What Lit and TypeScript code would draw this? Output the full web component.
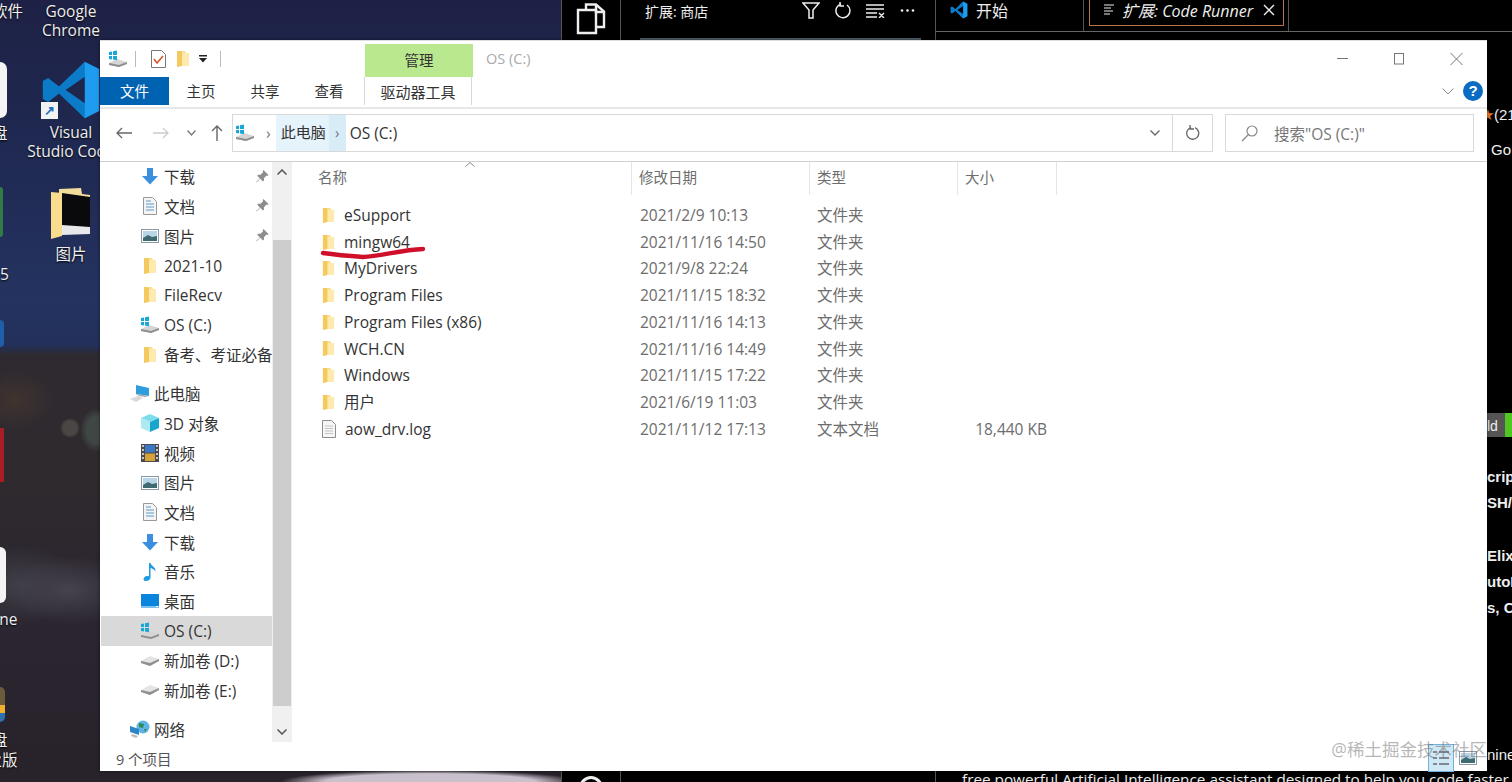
import { LitElement, html, css, svg } from "lit";
import { customElement } from "lit/decorators.js";

const folder = (w = 14, h = 18) => html`<svg width=${w} height=${h} viewBox="0 0 14 18">
  <path d="M1 1h8l1 2h3v13H3l-2 1z" fill="#fbe08f" />
  <path d="M1 1h4l1 1v14l-5 1z" fill="#f4c95f" />
  <path d="M6 3h7v13H6z" fill="#fdeaae" />
</svg>`;

const winDrive = (w = 20, h = 18) => html`<svg width=${w} height=${h} viewBox="0 0 20 18">
  <path d="M1 13l8-4 10 3v2l-8 3-10-2z" fill="#d5d5d5" />
  <path d="M1 13l10 2 8-3v2l-8 3-10-2z" fill="#8e8e8e" />
  <path d="M1 2l3-.6V5H1zM5 1.2l4-.8V5H5zM1 6h3v3.4L1 9zM5 6h4v4.2l-4-.6z" fill="#18a7d8" />
</svg>`;

const drive = () => html`<svg width="20" height="14" viewBox="0 0 20 14">
  <path d="M1 7l9-5 9 3v2l-9 5-9-3z" fill="#e4e4e4" />
  <path d="M1 7l9 2 9-4v2l-9 5-9-3z" fill="#8f8f8f" />
</svg>`;

const doc = () => html`<svg width="16" height="18" viewBox="0 0 16 18">
  <path d="M1.5.5h9l4 4v13h-13z" fill="#f4f4f4" stroke="#999" />
  <path d="M4 4h5M4 7h8M4 10h8M4 13h8" stroke="#5a9bc8" stroke-width="1.2" />
</svg>`;

const picture = () => html`<svg width="18" height="14" viewBox="0 0 18 14">
  <rect x=".5" y=".5" width="17" height="13" fill="#fff" stroke="#8c9aa8" />
  <rect x="2" y="2" width="14" height="10" fill="#b9d6e8" />
  <path d="M2 9l5-3 4 2 5-1v5H2z" fill="#3f6a70" />
</svg>`;

const download = () => html`<svg width="18" height="17" viewBox="0 0 18 17">
  <path d="M6 0h6v8h5l-8 8.5L1 8h5z" fill="#3a8fe0" />
</svg>`;

const pin = () => html`<svg width="13" height="13" viewBox="0 0 13 13">
  <path d="M7.5 0l5 5-1 1-1-.4-2.6 2.6.1 2.3-1 1-2.8-2.8L1 12l-1 .6.6-1 3.3-3.2L1.2 5.7l1-1 2.300.1L7.100 2.200 6.700 1.200z" fill="#8d8d8d" />
</svg>`;

const pc = () => html`<svg width="20" height="17" viewBox="0 0 20 17">
  <path d="M6 0l13 3v8L6 9z" fill="#2f9cdc" />
  <path d="M6 9l13 2-4 1-6-1z" fill="#aaa" />
  <path d="M0 14l8-3 5 2-7 4z" fill="#d8d8d8" />
</svg>`;

const cube = () => html`<svg width="18" height="18" viewBox="0 0 18 18">
  <path d="M9 0l9 4-9 4-9-4z" fill="#7fdcec" />
  <path d="M0 4l9 4v10l-9-4z" fill="#aeeaf2" />
  <path d="M18 4L9 8v10l9-4z" fill="#18a6cf" />
</svg>`;

const video = () => html`<svg width="18" height="18" viewBox="0 0 18 18">
  <rect width="18" height="18" fill="#4b4b50" />
  <rect x="4" y="1" width="10" height="7.500" fill="#3a77c4" />
  <rect x="4" y="9.500" width="10" height="7.500" fill="#d8a23a" />
  <path d="M1 2h2M1 6h2M1 10h2M1 14h2M15 2h2M15 6h2M15 10h2M15 14h2" stroke="#eee" stroke-width="1.500" />
</svg>`;

const music = () => html`<svg width="14" height="18" viewBox="0 0 14 18">
  <path d="M6 0h1.500c.5 3 5.500 4 5 8.500C11.500 6.500 9 5.500 7.500 5v9.500C7.500 16.500 5.500 18 3 18S0 16 1.200 14.500C2.500 13 5 12.800 6 13.300z" fill="#1f9be0" />
</svg>`;

const desktopIcon = () => html`<svg width="18" height="14" viewBox="0 0 18 14">
  <rect width="18" height="14" fill="#0a84dc" />
  <rect y="12" width="18" height="2" fill="#7cc0ee" />
  <rect x="15" y="12" width="2" height="1" fill="#fff" />
</svg>`;

const network = () => html`<svg width="20" height="18" viewBox="0 0 20 18">
  <circle cx="13" cy="7" r="6.500" fill="#5fb4e6" />
  <path d="M9 3l5 1-1 4-4-1zM14 9l3 0-2 3z" fill="#2e8a58" />
  <path d="M0 6l9 3v6l-9-3z" fill="#2d86c8" />
  <path d="M2 14l6 2-2 2-5-2z" fill="#bbb" />
</svg>`;

const logFile = () => html`<svg width="14" height="18" viewBox="0 0 14 18">
  <path d="M.5.5h9l4 4v13H.5z" fill="#f6f6f6" stroke="#8e8e8e" />
  <path d="M3 6h8M3 8.500h8M3 11h8M3 13.500h8" stroke="#c4c4c4" />
</svg>`;

const vsLogo = (size: number) => html`<svg width=${size} height=${size} viewBox="0 0 100 100">
  <path d="M73 3L97 15v70L73 97 38 60l35 12V28L38 40z" fill="#1f9cf0" />
  <path d="M73 3L30 44 12 30 3 35v30l9 5 18-14 43 41V72L41 50l32-22z" fill="#0b7bc8" />
</svg>`;

type NavRow = { icon: unknown; label: string; pinned?: boolean; top?: boolean; gap?: boolean; selected?: boolean };

const navRows: NavRow[] = [
  { icon: download(), label: "下载", pinned: true },
  { icon: doc(), label: "文档", pinned: true },
  { icon: picture(), label: "图片", pinned: true },
  { icon: folder(), label: "2021-10" },
  { icon: folder(), label: "FileRecv" },
  { icon: winDrive(), label: "OS (C:)" },
  { icon: folder(), label: "备考、考证必备资料" },
  { icon: pc(), label: "此电脑", top: true, gap: true },
  { icon: cube(), label: "3D 对象" },
  { icon: video(), label: "视频" },
  { icon: picture(), label: "图片" },
  { icon: doc(), label: "文档" },
  { icon: download(), label: "下载" },
  { icon: music(), label: "音乐" },
  { icon: desktopIcon(), label: "桌面" },
  { icon: winDrive(), label: "OS (C:)", selected: true },
  { icon: drive(), label: "新加卷 (D:)" },
  { icon: drive(), label: "新加卷 (E:)" },
  { icon: network(), label: "网络", top: true, gap: true },
];

const files = [
  ["eSupport", "2021/2/9 10:13", "文件夹", ""],
  ["mingw64", "2021/11/16 14:50", "文件夹", ""],
  ["MyDrivers", "2021/9/8 22:24", "文件夹", ""],
  ["Program Files", "2021/11/15 18:32", "文件夹", ""],
  ["Program Files (x86)", "2021/11/16 14:13", "文件夹", ""],
  ["WCH.CN", "2021/11/16 14:49", "文件夹", ""],
  ["Windows", "2021/11/15 17:22", "文件夹", ""],
  ["用户", "2021/6/19 11:03", "文件夹", ""],
  ["aow_drv.log", "2021/11/12 17:13", "文本文档", "18,440 KB"],
];

@customElement("app-root")
export class AppRoot extends LitElement {
  static styles = css`
    :host {
      display: block;
      width: 1512px;
      height: 782px;
      overflow: hidden;
      font-family: "Open Sans", "Noto Sans CJK SC", sans-serif;
      font-size: 15.5px;
      color: #333;
    }
    .desktop {
      position: relative;
      width: 1512px;
      height: 782px;
      overflow: hidden;
      background:
        radial-gradient(ellipse 10px 10px at 70px 428px, #4a4644 70%, transparent),
        radial-gradient(ellipse 16px 22px at 96px 430px, #3f4644 60%, transparent),
        radial-gradient(ellipse 40px 30px at 15px 400px, #41332f, transparent),
        radial-gradient(ellipse 60px 34px at 70px 590px, #46424e, transparent),
        radial-gradient(ellipse 60px 40px at 20px 585px, #403f48, transparent),
        radial-gradient(ellipse 150px 12px at 430px 782px, #c8c0cb 70%, transparent),
        linear-gradient(180deg, #1e2145 0, #1f2850 130px, #243360 300px, #22305a 345px, #2e2a30 355px, #2f2a2e 480px, #2a2530 640px, #28222a 782px);
    }
    /* desktop icons */
    .dlabel {
      position: absolute;
      width: 96px;
      left: 23px;
      text-align: center;
      color: #eee;
      line-height: 19px;
      text-shadow: 0 1px 2px #000;
      white-space: nowrap;
    }
    .edge {
      position: absolute;
      left: 0;
      color: #eee;
      line-height: 19px;
      text-shadow: 0 1px 2px #000;
      white-space: nowrap;
    }
    .tile {
      position: absolute;
      left: 0;
      border-radius: 0 8px 8px 0;
    }
    .vsicon {
      position: absolute;
      left: 41px;
      top: 60px;
      display: block;
    }
    .shortcut {
      position: absolute;
      left: 41px;
      top: 102px;
      width: 17px;
      height: 17px;
      background: #f2f2f2;
      color: #1b6fc4;
      font: bold 13px/17px "Liberation Sans", sans-serif;
      text-align: center;
    }
    .dfolder {
      position: absolute;
      left: 51px;
      top: 187px;
    }

    /* editor behind */
    .code {
      position: absolute;
      left: 561px;
      top: 0;
      right: 0;
      bottom: 0;
      background: #000;
      color: #eee;
      display: flex;
      border-left: 1px solid #555;
    }
    .activity {
      width: 59px;
      flex: none;
      border-right: 1px solid #555;
      display: flex;
      flex-direction: column;
      justify-content: space-between;
      align-items: center;
      padding-top: 3px;
      box-sizing: border-box;
      height: 782px;
    }
    .activity .ring {
      width: 24px;
      height: 24px;
      border: 3px solid #eee;
      border-radius: 50%;
      margin-bottom: -18px;
      box-sizing: border-box;
    }
    .side {
      width: 315px;
      flex: none;
      border-right: 1px solid #555;
      box-sizing: border-box;
      padding: 0 20px 0 24px;
      height: 782px;
    }
    .side-head {
      height: 21px;
      display: flex;
      align-items: center;
      font-size: 14px;
    }
    .side-tools {
      margin-left: auto;
      display: flex;
      gap: 15px;
      align-items: center;
    }
    .dots {
      width: 15px;
      height: 3px;
      display: block;
    }
    .side-input {
      margin: 17px 0 0 -5px;
      width: 281px;
      height: 3px;
      background: #4f6066;
    }
    .main {
      flex: 1;
      min-width: 0;
      display: flex;
      flex-direction: column;
      position: relative;
    }
    .tabs {
      height: 31px;
      flex: none;
      border-bottom: 1px solid #666;
      display: flex;
    }
    .tab {
      display: flex;
      align-items: center;
      gap: 8px;
      height: 26px;
      font-size: 16px;
    }
    .tab.start {
      width: 148px;
      padding-left: 14px;
      box-sizing: border-box;
      height: 31px;
      padding-bottom: 11px;
      border-right: 1px solid #555;
    }
    .tab-wrap {
      width: 205px;
      padding: 0 4px 0 5px;
      box-sizing: border-box;
      border-right: 1px solid #555;
    }
    .tab.active {
      border: 1px solid #b9744a;
      border-top: 0;
      font-style: italic;
      padding: 0 8px 6px 14px;
      box-sizing: border-box;
      justify-content: space-between;
      white-space: nowrap;
    }
    .peek {
      margin-left: auto;
      width: 25px;
      overflow: hidden;
      white-space: nowrap;
      color: #eee;
      font-size: 15px;
      font-weight: 700;
      flex: 1;
      font-family: "Liberation Sans", sans-serif;
    }
    .peek div {
      line-height: 26px;
    }
    .peek .bf {
      font-weight: 400;
    }
    .badge {
      display: flex;
      height: 24px;
      line-height: 24px;
      background: #555;
      margin-top: 0;
      font-weight: 400;
      font-size: 14px;
      width: 25px;
      padding-left: 0;
    }
    .badge i {
      margin-left: auto;
      width: 7px;
      background: #4ec820;
    }
    .footer {
      position: absolute;
      left: 26px;
      bottom: -7px;
      white-space: nowrap;
      font-size: 15.3px;
      line-height: 20px;
    }

    /* explorer */
    .window {
      position: absolute;
      left: 100px;
      top: 40px;
      width: 1387px;
      height: 731px;
      background: #fff;
      display: flex;
      flex-direction: column;
      box-shadow: 0 0 3px rgba(0, 0, 0, 0.5);
      border-top: 1px solid #ddd;
      box-sizing: border-box;
    }
    .titlebar {
      height: 36px;
      flex: none;
      display: flex;
      align-items: flex-end;
      padding-left: 8px;
      position: relative;
    }
    .qat {
      display: flex;
      align-items: center;
      height: 36px;
      padding-top: 0;
    }
    .qsep {
      width: 1px;
      height: 16px;
      background: #bbb;
      margin: 0 15px 0 7px;
    }
    .manage {
      margin-left: 144px;
      width: 108px;
      height: 33px;
      background: #b9e88f;
      color: #333;
      text-align: center;
      line-height: 34px;
      font-size: 14.5px;
    }
    .wtitle {
      margin-left: 13px;
      align-self: center;
      color: #aaa;
      font-size: 14.5px;
      margin-bottom: 2px;
    }
    .controls {
      margin-left: auto;
      align-self: flex-start;
      display: flex;
      gap: 46px;
      padding: 12px 24px 0 0;
    }
    .ribbon {
      height: 28px;
      flex: none;
      display: flex;
      align-items: stretch;
    }
    .rtab {
      width: 64px;
      text-align: center;
      line-height: 30px;
      font-size: 14.5px;
    }
    .rtab.file {
      width: 69px;
      background: #0063b1;
      color: #fff;
    }
    .rtab.tool {
      width: 108px;
      margin-left: 3px;
      border-left: 1px solid #d8d8d8;
      border-right: 1px solid #d8d8d8;
      box-sizing: border-box;
      font-size: 15px;
    }
    .ribbon-end {
      margin-left: auto;
      display: flex;
      align-items: center;
      gap: 9px;
      padding-right: 4px;
    }
    .help {
      width: 20px;
      height: 20px;
      border-radius: 50%;
      background: #0a6cc2;
      color: #fff;
      font: bold 15px/20px "Liberation Sans", sans-serif;
      text-align: center;
    }
    .rule {
      height: 2px;
      flex: none;
      margin-top: 2px;
      background: #e8e8e8;
    }
    .addr {
      height: 38px;
      flex: none;
      margin-top: 5px;
      display: flex;
      align-items: center;
    }
    .nav-btns {
      width: 132px;
      flex: none;
      display: flex;
      align-items: center;
      box-sizing: border-box;
      padding-left: 16px;
    }
    .pathbox {
      width: 981px;
      height: 38px;
      flex: none;
      box-sizing: border-box;
      border: 1px solid #d9d9d9;
      display: flex;
      align-items: center;
      padding-left: 2px;
    }
    .crumb-pc {
      background: #e5f3fb;
      height: 36px;
      line-height: 35px;
      width: 70px;
      flex: none;
      padding-left: 5px;
      box-sizing: border-box;
      margin-left: 5px;
      display: flex;
      font-size: 15px;
      white-space: nowrap;
    }
    .crumb-pc span:last-child {
      margin-left: auto;
      width: 17px;
      text-align: center;
      background: #d8ecf8;
      color: #777;
    }
    .caret {
      color: #777;
      padding-left: 11px;
      display: block;
    }
    .path-os {
      margin-left: 4px;
    }
    .path-end {
      margin-left: auto;
      display: flex;
      align-items: center;
      height: 36px;
    }
    .path-refresh {
      width: 39px;
      height: 36px;
      margin-left: 12px;
      border-left: 1px solid #d9d9d9;
      display: flex;
      align-items: center;
      justify-content: center;
    }
    .search {
      margin-left: 12px;
      width: 249px;
      height: 38px;
      box-sizing: border-box;
      border: 1px solid #d9d9d9;
      display: flex;
      align-items: center;
      gap: 16px;
      padding-left: 15px;
      color: #777;
    }
    .body {
      margin-top: 9px;
      flex: 1;
      min-height: 0;
      display: flex;
      border-top: 1px solid #cfcfcf;
    }
    .nav {
      width: 172px;
      flex: none;
      padding-left: 1px;
      box-sizing: border-box;
    }
    .nrow {
      height: 29.65px;
      display: flex;
      align-items: center;
      padding-left: 39px;
      white-space: nowrap;
      overflow: hidden;
      color: #333;
      position: relative;
    }
    .nrow.top {
      padding-left: 29px;
    }
    .nrow.gap {
      margin-top: 9.5px;
    }
    .nrow.sel {
      background: #d9d9d9;
    }
    .nicon {
      width: 20px;
      display: flex;
      justify-content: center;
      margin-right: 4px;
      flex: none;
    }
    .npin {
      position: absolute;
      left: 155px;
    }
    .scroll {
      width: 20px;
      flex: none;
      height: 580px;
      background: #f0f0f0;
      display: flex;
      flex-direction: column;
      align-items: center;
      justify-content: space-between;
      position: relative;
      padding: 7px 0;
      box-sizing: border-box;
    }
    .scroll svg {
      flex: none;
      display: block;
    }
    .thumb {
      position: absolute;
      left: 1px;
      right: 1px;
      top: 78px;
      height: 466px;
      background: #cdcdcd;
    }
    .list {
      flex: 1;
      min-width: 0;
      position: relative;
    }
    .grid {
      display: grid;
      grid-template-columns: 340px 178px 148px 99px;
    }
    .ghead {
      height: 33px;
      margin-bottom: 7px;
      color: #6d6d6d;
      font-size: 14.5px;
    }
    .ghead div {
      line-height: 32px;
      padding-left: 7px;
      border-right: 1px solid #e5e5e5;
      box-sizing: border-box;
    }
    .ghead div:first-child {
      padding-left: 26px;
    }
    .frow {
      height: 26.72px;
      line-height: 26.72px;
      color: #6d6d6d;
    }
    .fname {
      display: flex;
      align-items: center;
      gap: 9px;
      padding-left: 30px;
      color: #333;
    }
    .fcell {
      padding-left: 8px;
    }
    .fcell.ftype {
      padding-left: 7px;
    }
    .fsize {
      text-align: right;
      padding-right: 10px;
    }
    .sort {
      position: absolute;
      left: 173px;
      top: 0;
    }
    .ink {
      position: absolute;
      left: 28px;
      top: 79px;
    }
    .status {
      height: 26px;
      flex: none;
      display: flex;
      align-items: center;
      padding-left: 16px;
      color: #555;
      font-size: 14.5px;
      position: relative;
      margin-top: auto;
    }
    .views {
      margin-left: auto;
      margin-right: 10px;
      display: flex;
      align-items: center;
      gap: 5px;
    }
    .vbtn {
      width: 26px;
      height: 28px;
      background: #cfe8f6;
      border: 1px solid #6fb3dc;
      box-sizing: border-box;
      display: flex;
      align-items: center;
      justify-content: center;
    }
    .mark {
      position: absolute;
      right: 0;
      bottom: 10px;
      color: rgba(110, 110, 110, 0.5);
      font-size: 17.5px;
      white-space: nowrap;
    }
  `;

  private renderDesktop() {
    return html`
      <div class="edge" style="top:2px;left:-8px">软件</div>
      <div class="dlabel" style="top:2px">Google<br />Chrome</div>
      <div class="tile" style="top:62px;width:7px;height:56px;background:#f4f4f4"></div>
      <div class="edge" style="top:124px;left:-8px">盘</div>
      <div class="vsicon">${vsLogo(60)}</div>
      <div class="shortcut">↗</div>
      <div class="dlabel" style="top:123px">Visual<br />Studio Code</div>
      <div class="tile" style="top:187px;width:3px;height:50px;background:#2f7d45"></div>
      <svg class="dfolder" width="40" height="52" viewBox="0 0 40 52">
        <path d="M8 2l22-1 1 6 8 1v38H8z" fill="#f3dc9a" />
        <path d="M11 6l28 4v32l-28-1z" fill="#0a0a0c" />
        <path d="M11 38l28 2v7l-28 1z" fill="#e8e8ea" />
        <path d="M0 5l11 1v43L0 52z" fill="#f9dc8e" />
      </svg>
      <div class="dlabel" style="top:245px">图片</div>
      <div class="edge" style="top:265px">5</div>
      <div class="tile" style="top:320px;width:4px;height:27px;background:#1d5fa8;border-radius:0 14px 14px 0"></div>
      <div class="tile" style="top:428px;width:4px;height:54px;background:#a91d25;border-radius:0"></div>
      <div class="tile" style="top:547px;width:6px;height:56px;background:#f4f4f4"></div>
      <div class="edge" style="top:610px;left:-10px">one</div>
      <div class="tile" style="top:687px;width:5px;height:35px;background:linear-gradient(180deg,#6b5b3a 0,#6b5b3a 50%,#f0b030 50%,#f0b030 75%,#2d70b0 75%);border-radius:0 8px 8px 0"></div>
      <div class="edge" style="top:731px;left:-8px">盘</div>
      <div class="edge" style="top:751px;left:-29px">专业版</div>
    `;
  }

  private renderCode() {
    return html`
      <div class="code">
        <div class="activity">
          <svg width="30" height="32" viewBox="0 0 30 32" fill="none" stroke="#eee" stroke-width="2.4">
            <path d="M10 6V1.500h10l8 7V24h-8" />
            <path d="M20 1.500V9h8" />
            <path d="M2 7h18v23H2z" />
          </svg>
          <div class="ring"></div>
        </div>
        <div class="side">
          <div class="side-head">
            扩展: 商店
            <div class="side-tools">
              <svg width="18" height="17" viewBox="0 0 18 17" fill="none" stroke="#eee" stroke-width="1.500"><path d="M1 1h16l-6 7v8H7V8z" /></svg>
              <svg width="16" height="18" viewBox="0 0 16 18" fill="none" stroke="#eee" stroke-width="1.500"><path d="M6 2a7 7 0 1 0 6 1M5 0v4h4" /></svg>
              <svg width="19" height="14" viewBox="0 0 19 14" fill="none" stroke="#eee" stroke-width="1.400"><path d="M0 1h18M0 5h18M0 9h11M0 13h11M13 9l5 5M18 9l-5 5" /></svg>
              <svg class="dots" viewBox="0 0 15 3" fill="#eee"><circle cx="2" cy="1.500" r="1.300" /><circle cx="7.500" cy="1.500" r="1.300" /><circle cx="13" cy="1.500" r="1.300" /></svg>
            </div>
          </div>
          <div class="side-input"></div>
        </div>
        <div class="main">
          <div class="tabs">
            <div class="tab start">${vsLogo(18)}开始</div>
            <div class="tab-wrap">
              <div class="tab active">
                <span style="display:flex;align-items:center;gap:8px">
                  <svg width="10" height="12" viewBox="0 0 10 12" stroke="#eee"><path d="M0 1h10M0 4h7M0 7h9M0 10h6" /></svg>
                  扩展: Code Runner
                </span>
                <svg width="12" height="12" viewBox="0 0 12 12" stroke="#eee" stroke-width="1.400"><path d="M1 1l10 10M11 1L1 11" /></svg>
              </div>
            </div>
          </div>
          <div class="peek">
            <div class="bf" style="margin-top:70px;margin-left:-6px;color:#eee"><span style="color:#e0782a">★</span>(21</div>
            <div class="bf" style="margin-top:9px;margin-left:4px">Go</div>
            <div class="badge" style="margin-top:250px">ld<i></i></div>
            <div style="margin-top:27px">cript</div>
            <div>SH/</div>
            <div style="margin-top:27px">Elix</div>
            <div>utoI</div>
            <div>s, C</div>
            <div class="bf" style="margin-top:121px">nine</div>
          </div>
          <div class="footer">free powerful Artificial Intelligence assistant designed to help you code faster</div>
        </div>
      </div>
    `;
  }

  private renderExplorer() {
    return html`
      <div class="window">
        <div class="titlebar">
          <div class="qat">
            ${winDrive()}
            <div class="qsep"></div>
            <svg width="15" height="18" viewBox="0 0 15 18">
              <path d="M.5.5h10l4 4v13H.5z" fill="#fff" stroke="#777" />
              <path d="M3 9l3 4 6-7" fill="none" stroke="#d8552b" stroke-width="1.600" />
            </svg>
            <span style="margin-left:10px;display:flex">${folder()}</span>
            <svg style="margin-left:9px" width="8" height="8" viewBox="0 0 8 8"><path d="M0 0h8v1.500H0zM0 3h8L4 7.500z" fill="#222" /></svg>
            <div class="qsep" style="margin:0 0 0 13px"></div>
          </div>
          <div class="manage">管理</div>
          <div class="wtitle">OS (C:)</div>
          <div class="controls">
            <svg width="11" height="12" viewBox="0 0 11 12"><path d="M0 5.500h11" stroke="#777" /></svg>
            <svg width="10" height="12" viewBox="0 0 10 12"><rect x=".5" y=".5" width="9" height="10.500" fill="none" stroke="#777" /></svg>
            <svg width="13" height="12" viewBox="0 0 13 12"><path d="M.5 0l12 12M12.500 0l-12 12" stroke="#777" /></svg>
          </div>
        </div>
        <div class="ribbon">
          <div class="rtab file">文件</div>
          <div class="rtab">主页</div>
          <div class="rtab">共享</div>
          <div class="rtab">查看</div>
          <div class="rtab tool">驱动器工具</div>
          <div class="ribbon-end">
            <svg width="12" height="7" viewBox="0 0 12 7" fill="none" stroke="#888"><path d="M.5.500L6 6l5.500-5.500" /></svg>
            <div class="help">?</div>
          </div>
        </div>
        <div class="rule"></div>
        <div class="addr">
          <div class="nav-btns">
            <svg width="16" height="12" viewBox="0 0 16 12" fill="none" stroke="#666" stroke-width="1.300"><path d="M16 6H1M6 1L1 6l5 5" /></svg>
            <svg style="margin-left:21px" width="16" height="12" viewBox="0 0 16 12" fill="none" stroke="#ccc" stroke-width="1.300"><path d="M0 6h15M10 1l5 5-5 5" /></svg>
            <svg style="margin-left:18px" width="9" height="6" viewBox="0 0 9 6" fill="none" stroke="#777" stroke-width="1.300"><path d="M.5.500L4.500 5l4-4.500" /></svg>
            <svg style="margin-left:15px" width="12" height="16" viewBox="0 0 12 16" fill="none" stroke="#666" stroke-width="1.400"><path d="M6 16V1M1 6l5-5 5 5" /></svg>
          </div>
          <div class="pathbox">
            ${winDrive()}
            <span class="caret">›</span>
            <div class="crumb-pc"><span>此电脑</span><span>›</span></div>
            <span class="path-os">OS (C:)</span>
            <div class="path-end">
              <svg width="10" height="6" viewBox="0 0 10 6" fill="none" stroke="#666" stroke-width="1.300"><path d="M.5.500L5 5 9.500.500" /></svg>
              <div class="path-refresh">
                <svg width="14" height="16" viewBox="0 0 14 16" fill="none" stroke="#666" stroke-width="1.300"><path d="M5 2.500a6 6 0 1 0 4 .2M4 0v4h4" /></svg>
              </div>
            </div>
          </div>
          <div class="search">
            <svg width="17" height="17" viewBox="0 0 17 17" fill="none" stroke="#888" stroke-width="1.200"><circle cx="11" cy="6" r="5" /><path d="M7.500 9.500L1 16" /></svg>
            搜索"OS (C:)"
          </div>
        </div>
        <div class="body">
          <div class="nav">
            ${navRows.map(
              (r) => html`<div class="nrow ${r.top ? "top" : ""} ${r.gap ? "gap" : ""} ${r.selected ? "sel" : ""}">
                <span class="nicon">${r.icon}</span><span>${r.label}</span>
                ${r.pinned ? html`<span class="npin">${pin()}</span>` : ""}
              </div>`
            )}
          </div>
          <div class="scroll">
            <div class="thumb"></div>
            <svg width="10" height="6" viewBox="0 0 10 6" fill="none" stroke="#555" stroke-width="1.500"><path d="M.5 5.500L5 1l4.500 4.500" /></svg>
            <svg width="10" height="6" viewBox="0 0 10 6" fill="none" stroke="#555" stroke-width="1.500"><path d="M.5.500L5 5 9.500.500" /></svg>
          </div>
          <div class="list">
            <svg class="sort" width="10" height="5" viewBox="0 0 10 5" fill="none" stroke="#888"><path d="M.5 4.500L5 .5l4.500 4" /></svg>
            <div class="grid ghead">
              <div>名称</div>
              <div>修改日期</div>
              <div>类型</div>
              <div>大小</div>
            </div>
            ${files.map(
              (f, i) => html`<div class="grid frow">
                <div class="fname">${i === 8 ? logFile() : folder(13, 17)}<span>${f[0]}</span></div>
                <div class="fcell">${f[1]}</div>
                <div class="fcell ftype">${f[2]}</div>
                <div class="fsize">${f[3]}</div>
              </div>`
            )}
            <svg class="ink" width="108" height="20" viewBox="0 0 108 20" fill="none">
              ${svg`<path d="M3 12c14 2 26 3 40 4 18-1 38-7 60-8" stroke="#d0102a" stroke-width="4.4" stroke-linecap="round" />`}
            </svg>
          </div>
        </div>
        <div class="status">
          9 个项目
          <div class="views">
            <div class="vbtn">
              <svg width="16" height="18" viewBox="0 0 16 18" stroke="#667"><path d="M0 3h4M0 9h4M0 15h4M6 3h10M6 9h10M6 15h10" stroke-width="1.400" /></svg>
            </div>
            ${picture()}
          </div>
        </div>
        <div class="mark">@稀土掘金技术社区</div>
      </div>
    `;
  }

  render() {
    return html`<div class="desktop">${this.renderDesktop()} ${this.renderCode()} ${this.renderExplorer()}</div>`;
  }
}
